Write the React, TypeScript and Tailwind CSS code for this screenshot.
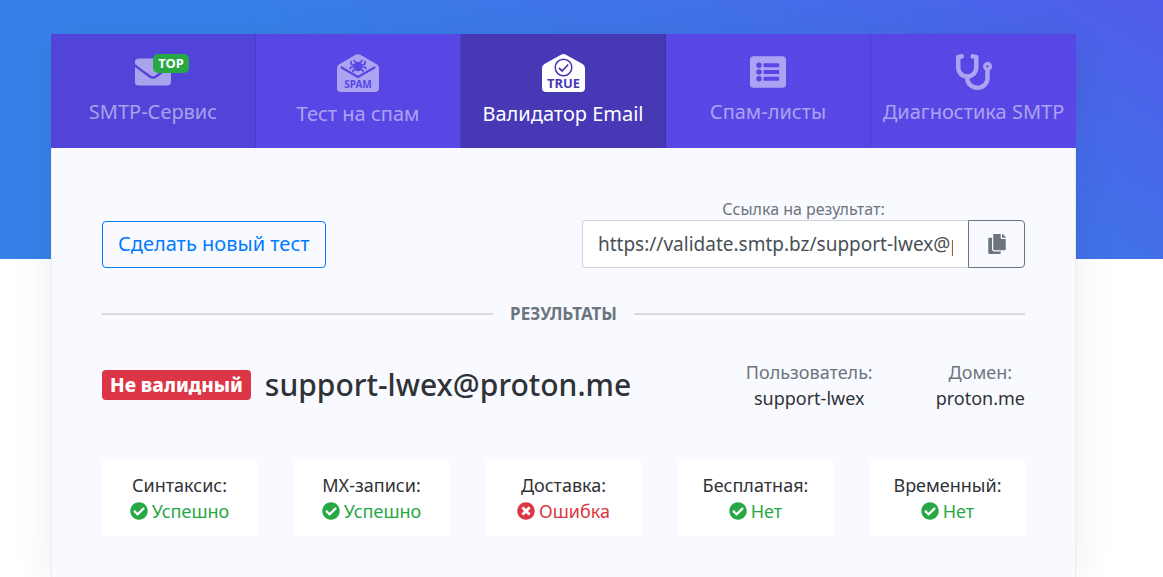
import type { ReactNode } from "react"
import {
  FaCheckCircle,
  FaCopy,
  FaEnvelope,
  FaListAlt,
  FaStethoscope,
  FaTimesCircle,
} from "react-icons/fa"

function SpamIcon() {
  return (
    <svg width="42" height="38" viewBox="0 0 42 38" aria-hidden="true">
      <path
        fill="currentColor"
        d="M18.6.8a5 5 0 0 1 4.8 0l16.2 9.4A5 5 0 0 1 42 14.4V34a4 4 0 0 1-4 4H4a4 4 0 0 1-4-4V14.4a5 5 0 0 1 2.4-4.2z"
      />
      <g stroke="#5847e5" fill="none" strokeLinecap="round" strokeLinejoin="round">
        <path strokeWidth="2.2" d="M4.5 13.5L21 23l16.500-9.500" />
        <path
          strokeWidth="1.7"
          d="M18 11.500l-4-1.500V7.500M24 11.500l4-1.500V7.500M19 9l-2-2.500M23 9l2-2.500M18 13h-4l-.8 1.500M24 13h4l.8 1.500M18.500 15L16 16.500v1M23.500 15l2.500 1.500v1"
        />
      </g>
      <ellipse cx="21" cy="12.5" rx="4.2" ry="4.8" fill="#5847e5" />
      <text
        x="21"
        y="34"
        textAnchor="middle"
        fill="#5847e5"
        className="text-[10px] font-bold"
      >
        SPAM
      </text>
    </svg>
  )
}

function TrueIcon() {
  return (
    <svg width="43" height="38" viewBox="0 0 43 38" aria-hidden="true">
      <path
        fill="currentColor"
        d="M19.1.7a5 5 0 0 1 4.8 0l16.700 9.400a5 5 0 0 1 2.400 4.200V34a4 4 0 0 1-4 4H4a4 4 0 0 1-4-4V14.300a5 5 0 0 1 2.400-4.200z"
      />
      <g stroke="#4739b6" strokeWidth="1.5" fill="none">
        <circle cx="21.5" cy="13.5" r="8.3" />
        <path strokeWidth="1.8" d="M17 14l3.200 3 6-6.500" />
      </g>
      <text
        x="21.5"
        y="34"
        textAnchor="middle"
        fill="#4739b6"
        className="text-[13px] font-bold"
      >
        TRUE
      </text>
    </svg>
  )
}

type Tab = { label: string; icon: ReactNode; state: string }

const tabs: Tab[] = [
  {
    label: "SMTP-Сервис",
    icon: (
      <span className="relative">
        <FaEnvelope size={36} />
        <span className="absolute left-1/2 top-0 h-[19px] w-9 rounded-[5px] bg-[#28a745] text-center text-[13px] font-bold leading-[19px] text-white">
          TOP
        </span>
      </span>
    ),
    state: "bg-[#5244d8] text-white/50",
  },
  { label: "Тест на спам", icon: <SpamIcon />, state: "text-white/50" },
  { label: "Валидатор Email", icon: <TrueIcon />, state: "bg-[#4739b6] text-white" },
  { label: "Спам-листы", icon: <FaListAlt size={36} />, state: "text-white/50" },
  { label: "Диагностика SMTP", icon: <FaStethoscope size={36} />, state: "text-white/50" },
]

const checks = [
  { title: "Синтаксис:", value: "Успешно", ok: true },
  { title: "MX-записи:", value: "Успешно", ok: true },
  { title: "Доставка:", value: "Ошибка", ok: false },
  { title: "Бесплатная:", value: "Нет", ok: true },
  { title: "Временный:", value: "Нет", ok: true },
]

export default function App() {
  return (
    <div className="flex min-h-screen flex-col bg-white bg-[linear-gradient(30deg,#3681e9_38%,#4270e8_72%,#505be9)] bg-[length:100%_259px] bg-no-repeat pl-[51px] pr-[87px] pt-[34px] font-['Noto_Sans',sans-serif] text-[#2f3236]">
      <div className="flex grow flex-col bg-[#f9faff] shadow-[0_8px_40px_rgba(0,0,0,0.07)]">
        <nav className="grid grid-cols-5 bg-[#5847e5]">
          {tabs.map((tab) => (
            <a
              key={tab.label}
              href="#"
              className={`flex h-[114px] flex-col items-center gap-[7px] border-r border-black/10 pt-5 last:border-r-0 ${tab.state}`}
            >
              {tab.icon}
              <span className="whitespace-nowrap text-xl leading-[30px]">{tab.label}</span>
            </a>
          ))}
        </nav>

        <main className="grow border-x border-black/5 px-[50px] pb-10 pt-[50px]">
          <section className="flex items-end justify-between">
            <button
              type="button"
              className="h-[47px] rounded border border-[#007bff] px-[15px] pb-0.5 text-xl text-[#007bff]"
            >
              Сделать новый тест
            </button>
            <div className="w-[48%]">
              <label
                htmlFor="result-link"
                className="block text-center text-base leading-[22px] text-[#6c757d]"
              >
                Ссылка на результат:
              </label>
              <div className="flex h-12">
                <input
                  id="result-link"
                  type="text"
                  readOnly
                  value="https://validate.smtp.bz/support-lwex@proton.me"
                  className="min-w-0 grow rounded-l border border-r-0 border-[#ced4da] bg-white px-[15px] text-[19px] text-[#495057]"
                />
                <button
                  type="button"
                  aria-label="Скопировать"
                  className="flex w-[57px] items-center justify-center rounded-r border border-[#6c757d] text-[#6c757d]"
                >
                  <FaCopy size={20} />
                </button>
              </div>
            </div>
          </section>

          <div className="mt-[34px] flex items-center gap-[17px]">
            <hr className="grow border-t-2 border-[#d8dadf]" />
            <h2 className="text-[17px] font-bold leading-6 text-[#6c757d]">РЕЗУЛЬТАТЫ</h2>
            <hr className="grow border-t-2 border-[#d8dadf]" />
          </div>

          <section className="mt-[33px] flex items-center justify-between">
            <div className="flex items-center gap-[14px]">
              <span className="rounded bg-[#dc3545] px-2 text-[19px] font-extrabold leading-[30px] text-white">
                Не валидный
              </span>
              <h1 className="text-[30px] font-medium leading-9">support-lwex@proton.me</h1>
            </div>
            <dl className="flex gap-[63px] text-center text-lg leading-[26px]">
              <div>
                <dt className="text-[#6c757d]">Пользователь:</dt>
                <dd>support-lwex</dd>
              </div>
              <div>
                <dt className="text-[#6c757d]">Домен:</dt>
                <dd>proton.me</dd>
              </div>
            </dl>
          </section>

          <section className="mt-[49px] grid grid-cols-5 gap-[37px]">
            {checks.map((check) => (
              <div
                key={check.title}
                className="bg-white py-3 text-center text-lg leading-[26px]"
              >
                <h3>{check.title}</h3>
                <p
                  className={`flex items-center justify-center gap-1 ${
                    check.ok ? "text-[#28a745]" : "text-[#dc3545]"
                  }`}
                >
                  {check.ok ? <FaCheckCircle size={18} /> : <FaTimesCircle size={18} />}
                  {check.value}
                </p>
              </div>
            ))}
          </section>
        </main>
      </div>
    </div>
  )
}
